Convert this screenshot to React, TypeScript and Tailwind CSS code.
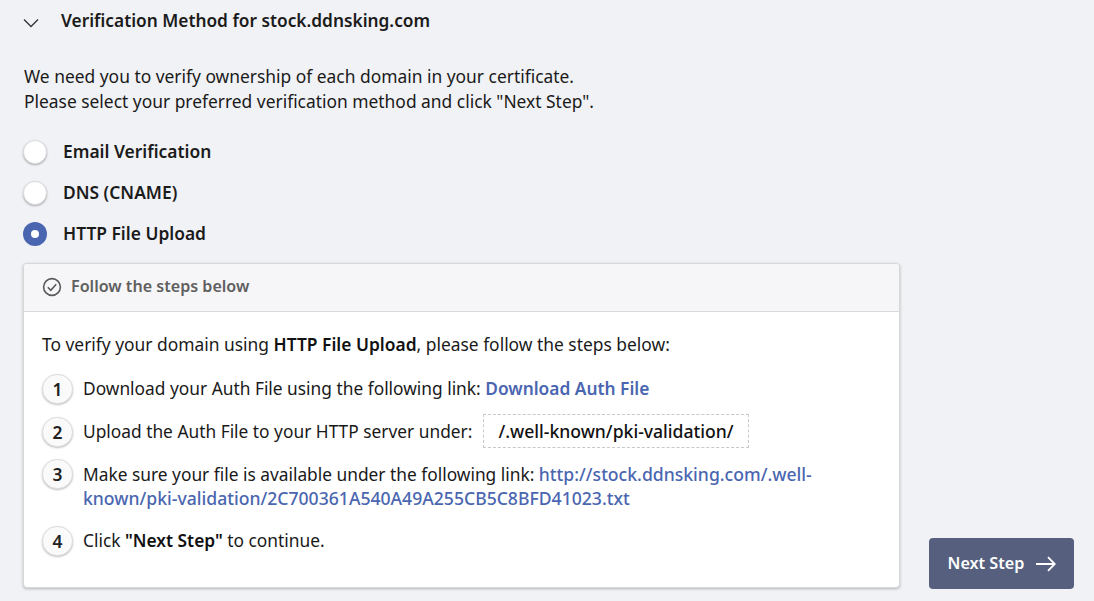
function Radio({ label, checked }: { label: string; checked?: boolean }) {
  return (
    <div className="flex items-center h-[41px]">
      {checked ? (
        <span className="w-6 h-6 rounded-full bg-[#4a66b0] flex items-center justify-center">
          <span className="w-2 h-2 rounded-full bg-white" />
        </span>
      ) : (
        <span className="w-6 h-6 rounded-full bg-white border border-[#dcdcdc] shadow-[0_1px_2px_rgba(0,0,0,0.3)]" />
      )}
      <span className="ml-[16px] font-semibold text-[17.4px] text-[#1b1b1b]">{label}</span>
    </div>
  )
}

function Step({ n, className, children }: { n: number; className?: string; children: React.ReactNode }) {
  return (
    <div className={`flex ${className ?? ''}`}>
      <span className="w-[31px] h-[30px] shrink-0 rounded-full bg-[#fafafa] border border-[#dddddd] shadow-[0_1px_2px_rgba(0,0,0,0.25)] flex items-center justify-center font-semibold text-[17.4px] text-[#222]">
        {n}
      </span>
      <div className="ml-[10px] text-[17.33px] leading-[24px] text-[#1a1a1a] pt-[2px]">{children}</div>
    </div>
  )
}

export default function App() {
  return (
    <div className="w-[1094px] h-[601px] overflow-hidden bg-[#f1f2f5] font-['Noto_Sans',sans-serif] text-[#1a1a1a]">
      <div className="flex items-center h-[41px] pl-[23px]">
        <svg width="16" height="10" viewBox="0 0 16 10" fill="none" stroke="#333" strokeWidth="1.3" className="mt-[5px]">
          <path d="M1 1.5l7 7 7-7" />
        </svg>
        <h2 className="ml-[22px] font-semibold text-[17.3px] text-[#1b1b1b]">Verification Method for stock.ddnsking.com</h2>
      </div>

      <p className="ml-6 mt-[23px] text-[17.4px] leading-[25px]">
        We need you to verify ownership of each domain in your certificate.
        <br />
        Please select your preferred verification method and click "Next Step".
      </p>

      <div className="ml-[23px] mt-[17px]">
        <Radio label="Email Verification" />
        <Radio label="DNS (CNAME)" />
        <Radio label="HTTP File Upload" checked />
      </div>

      <div className="flex items-end mt-[9px] ml-[23px]">
        <section className="w-[877px] h-[325px] bg-white rounded-[4px] border border-[#d8d8d8] shadow-[0_1px_3px_rgba(0,0,0,0.25)] overflow-hidden">
          <header className="h-[48px] pb-[2px] flex items-center pl-[18px] bg-[#f6f6f8] border-b border-[#d9d9d9] text-[#5f5f5f]">
            <svg width="20" height="20" viewBox="0 0 20 20" fill="none" stroke="#5a5a5a" strokeWidth="1.6">
              <circle cx="10" cy="10" r="8.4" />
              <path d="M5.8 10.3l3 3 5.4-6" />
            </svg>
            <span className="ml-[9px] font-semibold text-[16.1px]">Follow the steps below</span>
          </header>
          <div className="pl-[18px] pr-6 pt-[20px]">
            <p className="text-[17.4px] leading-[24px]">
              To verify your domain using <b className="font-semibold text-[#111]">HTTP File Upload</b>, please follow the steps below:
            </p>
            <Step n={1} className="mt-[18px]">
              Download your Auth File using the following link:{' '}
              <a className="font-semibold text-[#4a66b0]">Download Auth File</a>
            </Step>
            <Step n={2} className="mt-[13px]">
              <div className="flex items-center h-[24px]">
                Upload the Auth File to your HTTP server under:
                <span className="ml-[11px] h-[34px] px-[14px] flex items-center border border-dashed border-[#c8c8c8] font-medium text-[17.6px] text-[#111]">
                  /.well-known/pki-validation/
                </span>
              </div>
            </Step>
            <Step n={3} className="mt-[12px]">
              <div className="mt-px">
                Make sure your file is available under the following link:{' '}
                <a className="font-medium text-[17.6px] text-[#4a66b0]">
                  http://stock.ddnsking.com/.well-known/pki-validation/2C700361A540A49A255CB5C8BFD41023.txt
                </a>
              </div>
            </Step>
            <Step n={4} className="mt-[16px]">
              Click <b className="font-semibold text-[#111]">"Next Step"</b> to continue.
            </Step>
          </div>
        </section>
        <button className="ml-[29px] w-[145px] h-[51px] mb-[-1px] rounded-[4px] bg-[#56607e] text-white font-semibold text-[16.2px] flex items-center justify-center">
          <span className="ml-[1px]">Next Step</span>
          <svg width="20" height="16" viewBox="0 0 20 16" fill="none" stroke="#fff" strokeWidth="1.8" className="ml-[12px]">
            <path d="M0 8h18.5M12 1.2L18.8 8 12 14.8" />
          </svg>
        </button>
      </div>
    </div>
  )
}
